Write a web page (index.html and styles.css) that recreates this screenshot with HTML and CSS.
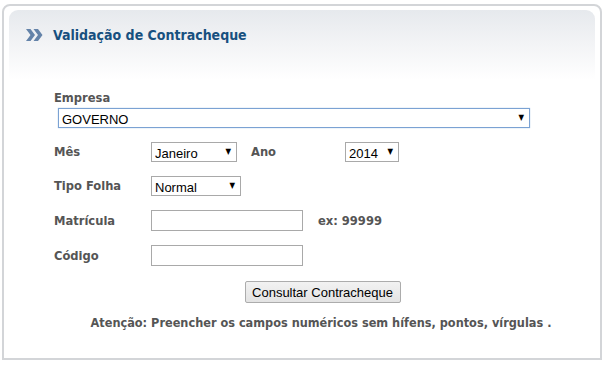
FILE: index.html
```html
<!DOCTYPE html>
<html lang="pt-BR">
<head>
<meta charset="utf-8">
<title>Validação de Contracheque</title>
<link rel="stylesheet" href="styles.css">
</head>
<body>
<div class="panel">
  <div class="header">
    <svg class="chevron" width="17" height="12" viewBox="0 0 17 12" aria-hidden="true">
      <polygon points="0,0 4.5,0 9,6 4.5,12 0,12 4.5,6" fill="#6483a9"/>
      <polygon points="7.5,0 12,0 16.5,6 12,12 7.5,12 12,6" fill="#6483a9"/>
    </svg>
    <h1 class="title">Validação de Contracheque</h1>
  </div>
  <form class="form">
    <label class="label block">Empresa</label>
    <div class="sel sel-empresa focused">
      <select><option>GOVERNO</option></select>
      <span class="arrow">▼</span>
    </div>

    <div class="row first">
      <span class="label col">Mês</span>
      <div class="sel sel-mes">
        <select><option>Janeiro</option></select>
        <span class="arrow">▼</span>
      </div>
      <span class="label ano">Ano</span>
      <div class="sel sel-ano">
        <select><option>2014</option></select>
        <span class="arrow">▼</span>
      </div>
    </div>

    <div class="row">
      <span class="label col">Tipo Folha</span>
      <div class="sel sel-tipo">
        <select><option>Normal</option></select>
        <span class="arrow">▼</span>
      </div>
    </div>

    <div class="row">
      <span class="label col">Matrícula</span>
      <input class="txt" type="text">
      <span class="label hint">ex: 99999</span>
    </div>

    <div class="row">
      <span class="label col">Código</span>
      <input class="txt" type="text">
    </div>

    <div class="actions">
      <button type="button" class="btn">Consultar Contracheque</button>
    </div>
    <p class="notice">Atenção: Preencher os campos numéricos sem hífens, pontos, vírgulas .</p>
  </form>
</div>
</body>
</html>
```
FILE: styles.css
```css
* { box-sizing: border-box; }
html, body { margin: 0; padding: 0; background: #fff; }
body { padding: 4px 8px 0 2px; }

.panel {
  border: 2px solid #d3d5d8;
  border-radius: 8px 8px 0 0;
  height: 356px;
  padding: 4px 5px 0 5px;
}

.header {
  display: flex;
  align-items: center;
  height: 70px;
  padding: 0 0 20px 17px;
  border-radius: 9px 9px 0 0;
  background: linear-gradient(to bottom, #e6e9ed 0%, #f3f4f6 50%, #ffffff 100%);
}
.chevron { flex: none; }
.title {
  margin: 0 0 0 10px;
  font-family: "DejaVu Sans Condensed", "DejaVu Sans", sans-serif;
  font-weight: bold;
  font-size: 14px;
  color: #17507f;
}

.form {
  padding: 11px 8px 0 45px;
  font-family: "DejaVu Sans Condensed", "DejaVu Sans", sans-serif;
}

.label {
  font-weight: bold;
  font-size: 12.8px;
  color: #555;
  line-height: 14px;
}
.block { display: block; }

.sel {
  position: relative;
  height: 20px;
  border: 1px solid #a9a9a9;
  background: #fff;
}
.sel select {
  appearance: none;
  -webkit-appearance: none;
  border: 0;
  outline: 0;
  background: transparent;
  width: 100%;
  height: 100%;
  margin: 0;
  padding: 0 0 1px 3px;
  font-family: "Liberation Sans", Arial, sans-serif;
  font-size: 13px;
  color: #000;
}
.sel .arrow {
  position: absolute;
  right: 5px;
  top: 4px;
  font-size: 8px;
  line-height: 10px;
  color: #000;
  pointer-events: none;
}
.sel-empresa { margin: 3px 0 0 4px; width: 472px; }
.focused { border-color: #7ba2d3; box-shadow: 0 0 1px #9cbbe0; }

.row {
  display: flex;
  align-items: center;
  margin-top: 14px;
}
.row.first { margin-top: 14px; }
.col { width: 97px; flex: none; }
.sel-mes { width: 86px; }
.ano { width: 94px; margin-left: 14px; }
.sel-ano { width: 54px; }
.sel-tipo { width: 90px; }

.txt {
  width: 152px;
  height: 21px;
  border: 1px solid #a9a9a9;
  margin: 0;
  padding: 0 3px;
  font-family: "Liberation Sans", Arial, sans-serif;
  font-size: 13px;
}
.hint { margin-left: 15px; }

.actions {
  display: flex;
  justify-content: center;
  margin-top: 15px;
  padding-left: 4px;
}
.btn {
  height: 22px;
  width: 156px;
  padding: 0;
  border: 1px solid #acacac;
  border-radius: 2px;
  background: linear-gradient(to bottom, #f2f2f2, #e3e3e3);
  font-family: "Liberation Sans", Arial, sans-serif;
  font-size: 13px;
  color: #000;
}

.notice {
  margin: 13px 0 0 0;
  padding-left: 1px;
  text-align: center;
  font-weight: bold;
  font-size: 12.6px;
  color: #555;
  line-height: 14px;
}
```
